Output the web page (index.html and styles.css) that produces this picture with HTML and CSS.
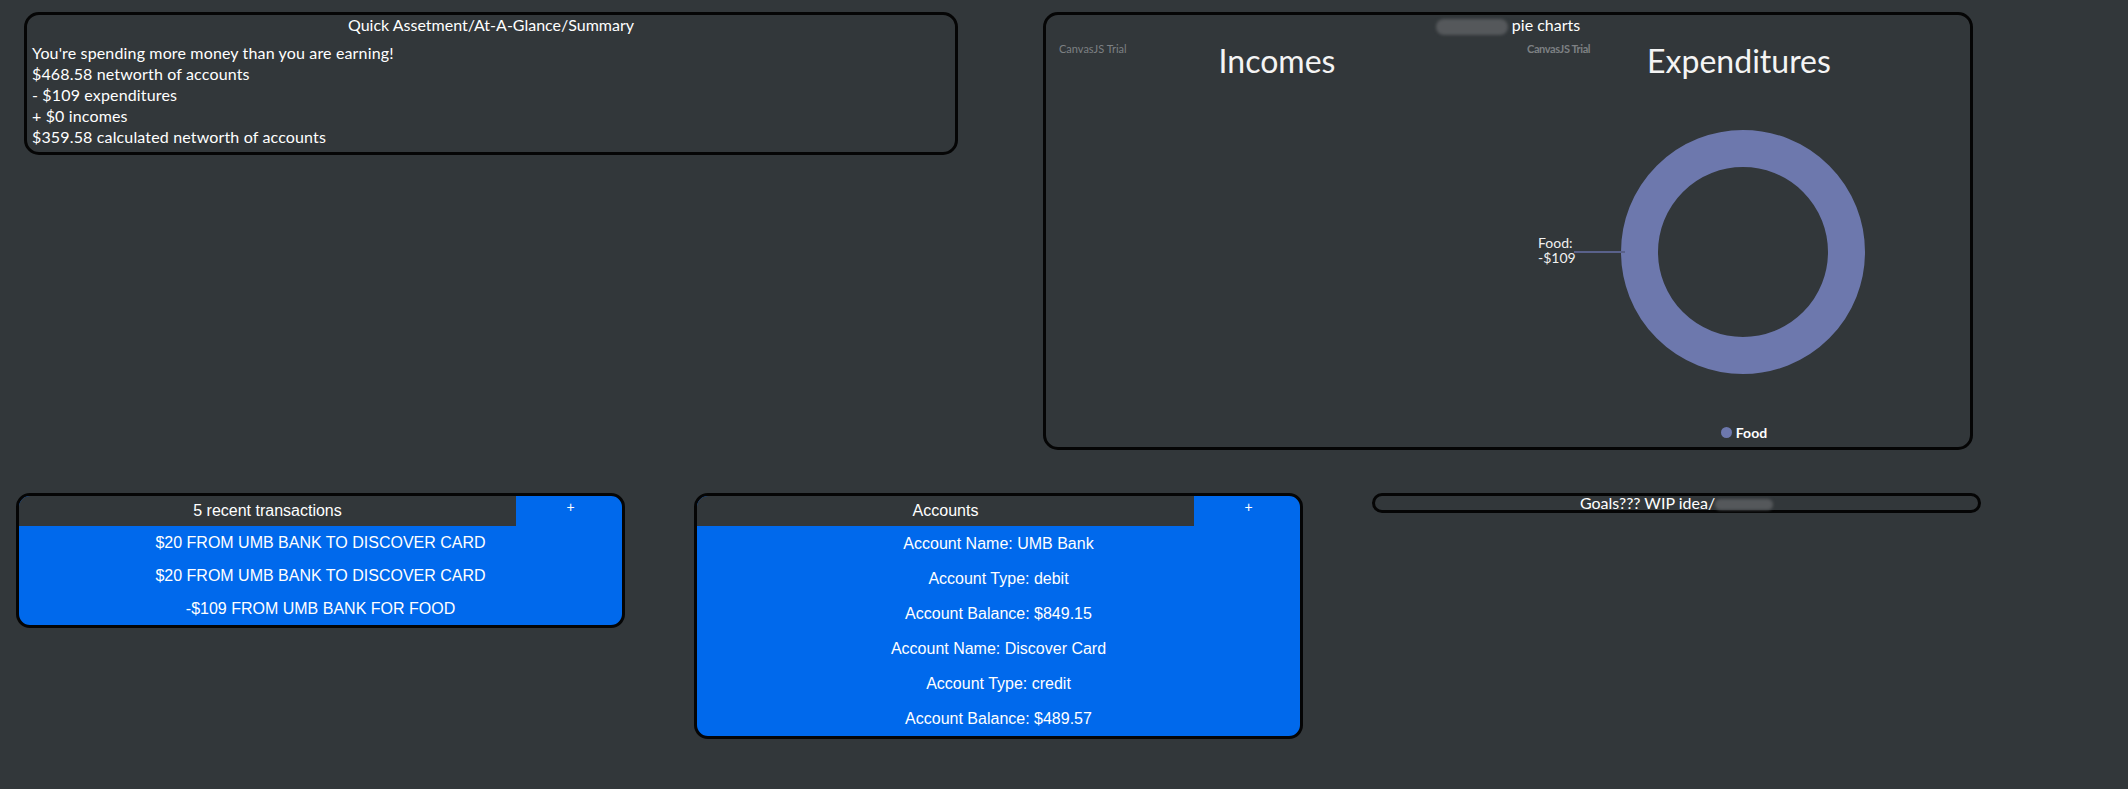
FILE: index.html
```html
<!DOCTYPE html>
<html lang="en">
<head>
    <meta charset="UTF-8">
    <title>Dashboard</title>
    <link rel="stylesheet" href="styles.css">
</head>
<body>
    <div class="row row-top">
        <section class="panel summary">
            <h2 class="panel-title">Quick Assetment/At-A-Glance/Summary</h2>
            <div class="summary-body">
                <p>You're spending more money than you are earning!</p>
                <p>$468.58 networth of accounts</p>
                <p>- $109 expenditures</p>
                <p>+ $0 incomes</p>
                <p>$359.58 calculated networth of accounts</p>
            </div>
        </section>

        <section class="panel charts">
            <h2 class="panel-title"><span class="redacted"></span> pie charts</h2>
            <div class="chart-pair">
                <div class="chart">
                    <span class="trial">CanvasJS Trial</span>
                    <div class="chart-title">Incomes</div>
                    <div class="plot"></div>
                    <div class="legend"></div>
                </div>
                <div class="chart">
                    <span class="trial trial-bold">CanvasJS Trial</span>
                    <div class="chart-title">Expenditures</div>
                    <svg class="plot" viewBox="0 0 462 344" width="462" height="344">
                        <circle cx="235" cy="171" r="103.5" fill="none" stroke="#6d78ad" stroke-width="37"/>
                        <line x1="66" y1="171" x2="117" y2="171" stroke="#59618a" stroke-width="2"/>
                        <text class="pie-label" x="30" y="167">Food:</text>
                        <text class="pie-label" x="30" y="182">-$109</text>
                    </svg>
                    <div class="legend">
                        <span class="legend-dot"></span>
                        <span class="legend-text">Food</span>
                    </div>
                </div>
            </div>
        </section>
    </div>

    <div class="row row-bottom">
        <section class="card">
            <div class="card-head">
                <div class="card-title">5 recent transactions</div>
                <div class="card-add">+</div>
            </div>
            <div class="card-row tx">$20 FROM UMB BANK TO DISCOVER CARD</div>
            <div class="card-row tx">$20 FROM UMB BANK TO DISCOVER CARD</div>
            <div class="card-row tx">-$109 FROM UMB BANK FOR FOOD</div>
        </section>

        <section class="card">
            <div class="card-head">
                <div class="card-title">Accounts</div>
                <div class="card-add">+</div>
            </div>
            <div class="card-row">Account Name: UMB Bank</div>
            <div class="card-row">Account Type: debit</div>
            <div class="card-row">Account Balance: $849.15</div>
            <div class="card-row">Account Name: Discover Card</div>
            <div class="card-row">Account Type: credit</div>
            <div class="card-row">Account Balance: $489.57</div>
        </section>

        <section class="goals">Goals??? WIP idea/<span class="redacted redacted-small"></span></section>
    </div>
</body>
</html>
```

FILE: styles.css
```css
* {
    margin: 0;
    padding: 0;
    box-sizing: border-box;
}

body {
    background: #32373a;
    color: #fff;
    font-family: 'Lato', 'Noto Sans', sans-serif;
    font-size: 16px;
    min-height: 100vh;
}

.row {
    display: flex;
    align-items: flex-start;
}

.row-top {
    padding: 12px 0 0 24px;
    gap: 85px;
}

.row-bottom {
    margin-top: 43px;
    padding-left: 16px;
    gap: 69px;
}

.panel {
    border: 3px solid #050505;
    border-radius: 15px;
}

.panel-title {
    font-size: 16px;
    font-weight: 400;
    line-height: 19px;
    text-align: center;
}

.summary {
    width: 934px;
}

.summary-body {
    padding: 8px 5px 5px;
    line-height: 21px;
    letter-spacing: 0.15px;
}

.charts {
    width: 930px;
}

.chart-pair {
    display: flex;
}

.chart {
    position: relative;
    flex: 1;
    display: flex;
    flex-direction: column;
    padding: 6px 0;
    height: 412px;
}

.trial {
    position: absolute;
    top: 7px;
    left: 13px;
    font-family: 'Lato', sans-serif;
    font-size: 11px;
    color: #7d8083;
}

.trial-bold {
    left: 19px;
    font-weight: 700;
    letter-spacing: -0.4px;
}

.chart-title {
    font-family: 'Lato', sans-serif;
    font-size: 32px;
    line-height: 40px;
    text-align: center;
    color: #f4f4f4;
}

.plot {
    display: block;
    height: 344px;
}

.pie-label {
    font-family: 'Lato', sans-serif;
    font-size: 14px;
    fill: #f0f0f0;
}

.legend {
    height: 16px;
    display: flex;
    justify-content: center;
    align-items: center;
    gap: 4px;
    padding-left: 10px;
}

.legend-dot {
    width: 11px;
    height: 11px;
    border-radius: 50%;
    background: #6d78ad;
}

.legend-text {
    font-size: 14px;
    font-weight: 700;
}

.redacted {
    display: inline-block;
    width: 72px;
    height: 16px;
    vertical-align: middle;
    background: #55585b;
    border-radius: 8px;
    filter: blur(1.5px);
}

.card {
    width: 609px;
    border: 3px solid #050505;
    border-radius: 14px;
    overflow: hidden;
    background: #0069ec;
    font-family: 'Liberation Sans', Arial, sans-serif;
}

.card-head {
    display: flex;
    height: 30px;
}

.card-title {
    flex: 1;
    background: #32373a;
    text-align: center;
    line-height: 30px;
}

.card-add {
    width: 106px;
    padding-left: 3px;
    text-align: center;
    font-size: 14px;
    line-height: 15px;
    padding-top: 4px;
}

.card-row {
    height: 35px;
    line-height: 35px;
    text-align: center;
}

.card-row.tx {
    height: 33px;
    line-height: 33px;
}

.goals {
    width: 609px;
    height: 20px;
    border: 3px solid #050505;
    border-radius: 12px;
    text-align: center;
    line-height: 14px;
}

.redacted-small {
    width: 58px;
    height: 11px;
}
```
